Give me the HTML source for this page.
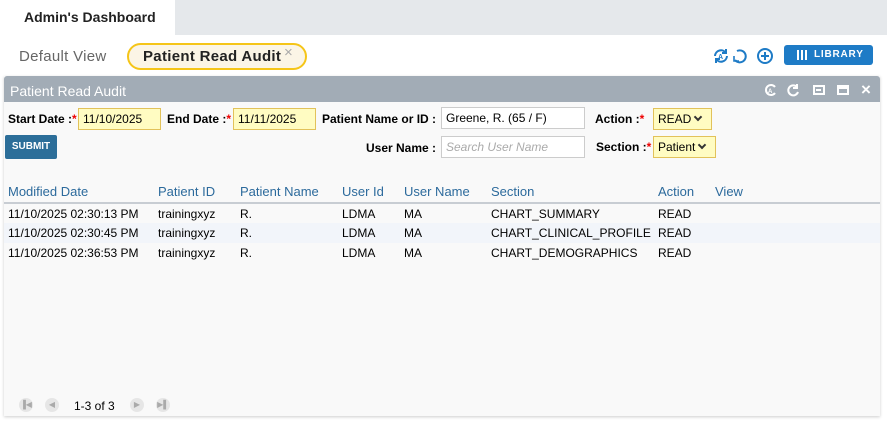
<!DOCTYPE html>
<html><head><style>
*{box-sizing:border-box;margin:0;padding:0}
body{width:887px;height:424px;background:#fff;font-family:"Liberation Sans",sans-serif;position:relative;overflow:hidden;font-size:12px;color:#000}
.abs{position:absolute}
.tabbar{left:175px;top:0;width:712px;height:35px;background:#e5e8eb}
.lbl{font-weight:bold;font-size:12px}
.req{color:#e00}
.inp{position:absolute;height:22px;border:1px solid #ccc;background:#fff;font-size:12px;padding:3px 4px}
.yel{background:#fffcc2;border-color:#e2c25a}
th,td{text-align:left;font-weight:normal;white-space:nowrap}
.tbl{position:absolute;left:4px;top:180px;width:876px;border-collapse:collapse}
.tbl th{color:#2c6a9c;font-size:13px;height:23px;padding-left:4px;border-bottom:2px solid #c8cdd3}
.tbl td{height:20px;padding-left:4px;font-size:12px}
.tbl tr.alt td{background:#f2f5fa}
.pg{width:14px;height:14px;border-radius:7px;background:#e6e6e6;color:#aaa;font-size:8px;text-align:center;line-height:14px}
.chev{display:inline-block;width:6px;height:6px;border-right:2px solid #333;border-bottom:2px solid #333;transform:rotate(45deg);margin-left:4px;position:relative;top:-3px}
</style></head><body>
<div class="abs" style="left:24px;top:9px;font-size:14px;font-weight:bold;color:#222">Admin's Dashboard</div>
<div class="abs tabbar"></div>
<div class="abs" style="left:19px;top:48px;font-size:15px;color:#666;letter-spacing:.3px">Default View</div>
<div class="abs" style="left:127px;top:43px;width:180px;height:27px;border:2px solid #f5c518;border-radius:14px;background:#fbf5e6"></div>
<div class="abs" style="left:143px;top:48px;font-size:15px;font-weight:bold;color:#222;letter-spacing:.3px">Patient Read Audit</div>
<div class="abs" style="left:284px;top:44px;font-size:15px;color:#aaa">×</div>
<svg class="abs" style="left:712px;top:47px" width="62" height="18" viewBox="0 0 62 18">
<g fill="none" stroke="#1e7bc6" stroke-width="2"><path d="M3 9a6 6 0 0 1 11-3M15 9a6 6 0 0 1-11 3"/><path d="M14 2v4h-4M4 16v-4h4"/>
<path d="M25 4a6 6 0 1 1-2 9"/><path d="M22 9v5h5" stroke-width="1.6"/>
<circle cx="53" cy="9" r="7"/><path d="M53 5v8M49 9h8"/></g>
<text x="6" y="12" font-size="7" font-weight="bold" fill="#1e7bc6" font-family="Liberation Sans">A</text></svg>
<div class="abs" style="left:784px;top:45px;width:89px;height:20px;background:#1e7bc6;border-radius:3px;color:#fff;font-size:10px;font-weight:bold;letter-spacing:.8px;line-height:20px;padding-left:30px;display:flex;align-items:center">LIBRARY</div>
<div class="abs" style="left:797px;top:50px;width:10px;height:10px;border:2px solid #fff;border-top:none;border-bottom:none"></div>
<div class="abs" style="left:801px;top:50px;width:2px;height:10px;background:#fff"></div>
<div class="abs" style="left:4px;top:76px;width:876px;height:340px;background:#f9f9f9;box-shadow:0 1px 3px rgba(0,0,0,.2)"></div>
<div class="abs" style="left:4px;top:76px;width:876px;height:26px;background:#a2acb6;border-radius:3px 3px 0 0"></div>
<div class="abs" style="left:10px;top:83px;color:#fff;font-size:14px">Patient Read Audit</div>
<svg class="abs" style="left:764px;top:83px" width="40" height="14" viewBox="0 0 40 14"><g fill="none" stroke="#fff" stroke-width="2"><path d="M11 4a5 5 0 1 0 0 6"/><path d="M33 4a5 5 0 1 0 1 5"/><path d="M33 1v4h-4"/></g><text x="4" y="10" font-size="6" font-weight="bold" fill="#fff" font-family="Liberation Sans">A</text></svg>
<div class="abs" style="left:813px;top:85px;width:12px;height:10px;border:2px solid #fff"></div>
<div class="abs" style="left:816px;top:89px;width:5px;height:2px;background:#fff"></div>
<div class="abs" style="left:837px;top:85px;width:12px;height:10px;border:2px solid #fff;border-top-width:4px"></div>
<div class="abs" style="left:861px;top:80px;color:#fff;font-size:17px;font-weight:bold">×</div>
<div class="abs lbl" style="left:8px;top:112px">Start Date :<span class="req">*</span></div>
<div class="inp yel" style="left:78px;top:108px;width:83px">11/10/2025</div>
<div class="abs lbl" style="left:167px;top:112px">End Date :<span class="req">*</span></div>
<div class="inp yel" style="left:233px;top:108px;width:83px">11/11/2025</div>
<div class="abs lbl" style="left:322px;top:112px">Patient Name or ID :</div>
<div class="inp" style="left:441px;top:107px;width:144px">Greene, R. (65 / F)</div>
<div class="abs lbl" style="left:595px;top:112px">Action :<span class="req">*</span></div>
<div class="inp yel" style="left:653px;top:108px;width:59px">READ<span class="chev"></span></div>
<div class="abs" style="left:5px;top:135px;width:52px;height:24px;background:#2c6e99;border-radius:2px;color:#fff;font-size:10px;font-weight:bold;text-align:center;line-height:24px">SUBMIT</div>
<div class="abs lbl" style="left:366px;top:141px">User Name :</div>
<div class="inp" style="left:441px;top:136px;width:144px;color:#aaa;font-style:italic">Search User Name</div>
<div class="abs lbl" style="left:596px;top:140px">Section :<span class="req">*</span></div>
<div class="inp yel" style="left:653px;top:136px;width:63px">Patient<span class="chev"></span></div>
<table class="tbl">
<tr><th style="width:150px">Modified Date</th><th style="width:82px">Patient ID</th><th style="width:102px">Patient Name</th><th style="width:62px">User Id</th><th style="width:87px">User Name</th><th style="width:167px">Section</th><th style="width:57px">Action</th><th>View</th></tr>
<tr><td>11/10/2025 02:30:13 PM</td><td>trainingxyz</td><td>R.</td><td>LDMA</td><td>MA</td><td>CHART_SUMMARY</td><td>READ</td><td></td></tr>
<tr class="alt"><td>11/10/2025 02:30:45 PM</td><td>trainingxyz</td><td>R.</td><td>LDMA</td><td>MA</td><td>CHART_CLINICAL_PROFILE</td><td>READ</td><td></td></tr>
<tr><td>11/10/2025 02:36:53 PM</td><td>trainingxyz</td><td>R.</td><td>LDMA</td><td>MA</td><td>CHART_DEMOGRAPHICS</td><td>READ</td><td></td></tr>
</table>
<div class="abs pg" style="left:19px;top:398px">▐◀</div>
<div class="abs pg" style="left:45px;top:398px">◀</div>
<div class="abs" style="left:74px;top:399px">1-3 of 3</div>
<div class="abs pg" style="left:130px;top:398px">▶</div>
<div class="abs pg" style="left:156px;top:398px">▶▌</div>
</body></html>
